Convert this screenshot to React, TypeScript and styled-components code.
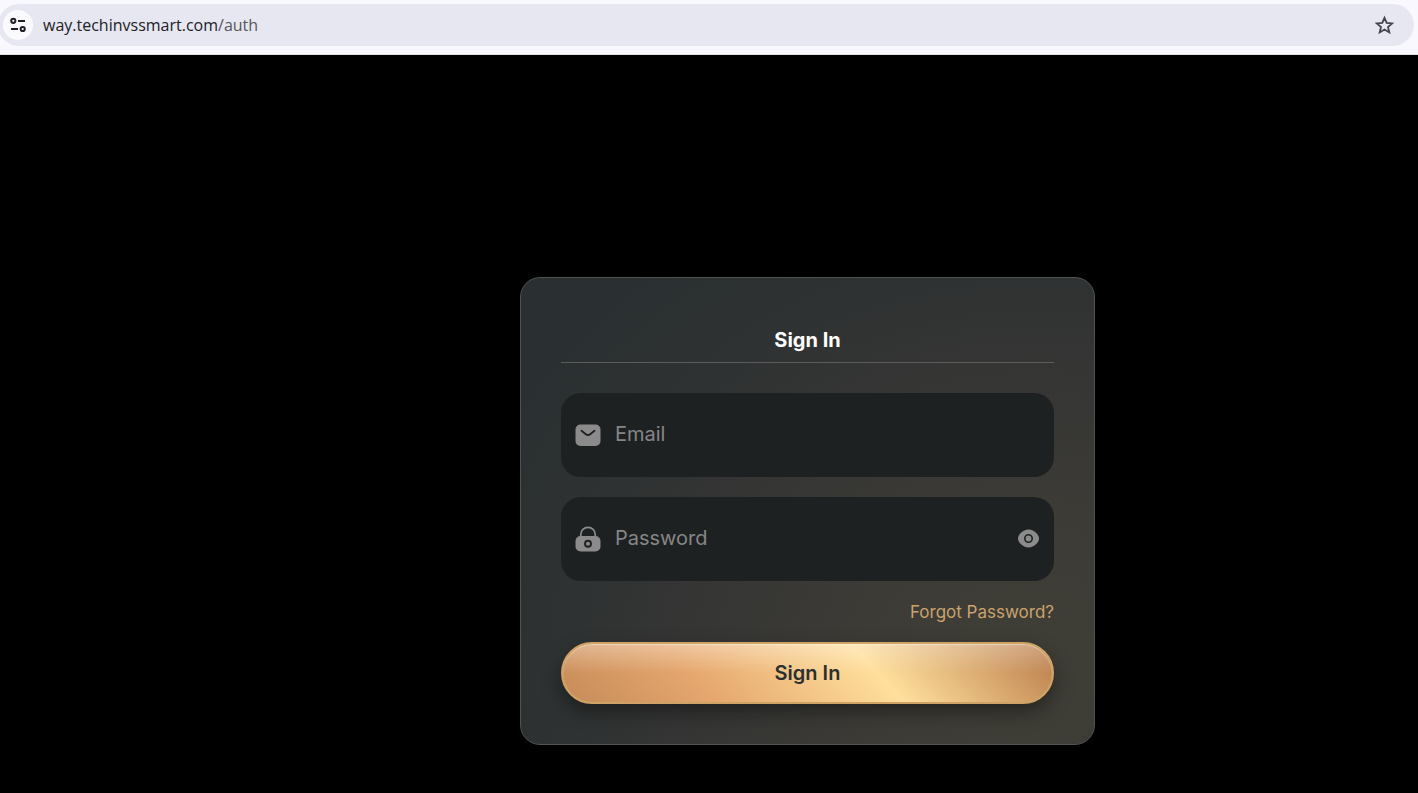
import React, { useState } from 'react';
import styled, { createGlobalStyle } from 'styled-components';

const GlobalStyle = createGlobalStyle`
  *, *::before, *::after { box-sizing: border-box; }
  html, body, #root { min-height: 100%; }
  body {
    margin: 0;
    background: #000;
    font-family: Inter, "Liberation Sans", sans-serif;
  }
`;

const BrowserBar = styled.header`
  padding: 4px 4px 8px 0;
  background: #f8f8fe;
  border-bottom: 1px solid #dfdfe6;
`;

const AddressPill = styled.div`
  display: flex;
  align-items: center;
  height: 42px;
  margin-left: -2px;
  padding: 0 20px 0 5px;
  border-radius: 21px;
  background: #e7e7f1;
`;

const IconButton = styled.button`
  display: flex;
  align-items: center;
  justify-content: center;
  flex: none;
  padding: 0;
  border: 0;
  background: none;
  color: inherit;
  cursor: pointer;
`;

const SiteInfoButton = styled(IconButton)`
  width: 30px;
  height: 30px;
  border-radius: 50%;
  background: #fbfbff;
  color: #202126;
`;

const StarButton = styled(IconButton)`
  color: #43444c;
`;

const Address = styled.div`
  flex: 1;
  margin-left: 10px;
  font: 16px/24px "Open Sans", "Noto Sans", sans-serif;
  color: #202126;
`;

const AddressPath = styled.span`
  color: #55565e;
`;

const Page = styled.main`
  display: flex;
  justify-content: center;
  padding: 222px 0 48px 197px;
`;

const Card = styled.form`
  width: 100%;
  max-width: 575px;
  padding: 40px;
  border: 1px solid #50524f;
  border-radius: 20px;
  background:
    radial-gradient(ellipse 105% 110% at 90% 83%, #3f3e36 0%, #3c3b36 30%, #353534 58%, #2e3232 80%, #2a2f31 100%);
`;

const Title = styled.h1`
  margin: 0 0 30px;
  padding: 10px 0;
  border-bottom: 1px solid #5c5d5b;
  font-size: 20px;
  line-height: 24px;
  font-weight: 700;
  text-align: center;
  color: #fff;
`;

const Field = styled.div`
  display: flex;
  align-items: center;
  gap: 14px;
  height: 84px;
  margin-bottom: 20px;
  padding: 0 14px;
  border-radius: 20px;
  background: #1e2122;
  color: #8b8b8b;
`;

const FieldLabel = styled.label`
  display: flex;
  flex: none;
`;

const Input = styled.input`
  flex: 1;
  min-width: 0;
  height: 100%;
  padding: 0 0 2px;
  border: 0;
  outline: 0;
  background: none;
  font: 20px/24px Inter, "Liberation Sans", sans-serif;
  color: #fff;
  &::placeholder { color: #858686; opacity: 1; }
`;

const ForgotRow = styled.div`
  display: flex;
  justify-content: flex-end;
  margin-bottom: 18px;
`;

const ForgotLink = styled.a`
  font-size: 17px;
  line-height: 23px;
  color: #cba36d;
  text-decoration: none;
`;

const SubmitButton = styled.button`
  display: block;
  width: 100%;
  height: 62px;
  padding: 0;
  border: 2px solid #cfa265;
  border-radius: 31px;
  background:
    linear-gradient(180deg, rgba(255, 255, 255, 0.3) 0%, rgba(255, 255, 255, 0) 50%) padding-box,
    linear-gradient(48deg, #c68b59 0%, #e6a86f 29%, #ffdf9c 63%, #c08552 96%) padding-box,
    #cfa265;
  box-shadow:
    inset 0 1px 1px rgba(255, 255, 255, 0.4),
    0 8px 20px rgba(0, 0, 0, 0.4);
  font: 600 20px/24px Inter, "Liberation Sans", sans-serif;
  color: #2a2f31;
  cursor: pointer;
`;

const TuneIcon = () => (
  <svg width="18" height="18" viewBox="0 0 18 18" fill="none" stroke="currentColor" strokeWidth="2" aria-hidden="true">
    <circle cx="4.300" cy="4.800" r="2.100" />
    <path d="M9 5h7M2 13h7" />
    <circle cx="13.700" cy="13" r="2.100" />
  </svg>
);

const StarIcon = () => (
  <svg width="20" height="20" viewBox="0 0 20 20" fill="none" stroke="currentColor" strokeWidth="1.800" aria-hidden="true">
    <path d="M10.500 2.800l2.200 5.100 5.500.5-4.200 3.600 1.300 5.400-4.800-2.900-4.800 2.900 1.300-5.400-4.200-3.600 5.500-.5z" />
  </svg>
);

const MailIcon = () => (
  <svg width="26" height="26" viewBox="0 0 26 26" aria-hidden="true">
    <rect x="0.500" y="2.500" width="25" height="21.500" rx="5" fill="currentColor" />
    <path d="M6.500 8.800l4.300 3.400c1.300 1 3.100 1 4.400 0l4.300-3.400" fill="none" stroke="#1e2122" strokeWidth="1.800" strokeLinecap="round" />
  </svg>
);

const LockIcon = () => (
  <svg width="26" height="26" viewBox="0 0 26 26" aria-hidden="true">
    <path d="M5.800 11V8.500a7.200 7.200 0 0 1 14.400 0V11" fill="none" stroke="currentColor" strokeWidth="1.700" />
    <rect x="0.500" y="10" width="25" height="15.500" rx="5" fill="currentColor" />
    <circle cx="13" cy="17.700" r="3" fill="none" stroke="#1e2122" strokeWidth="1.900" />
  </svg>
);

const EyeIcon = () => (
  <svg width="22" height="20" viewBox="0 0 22 20" aria-hidden="true">
    <path d="M10.500.5C4.500.5 0 6 0 9.500s4.500 9 10.500 9S21 13 21 9.500 16.500.5 10.500.5z" fill="currentColor" />
    <circle cx="10.500" cy="9.500" r="3.700" fill="none" stroke="#1e2122" strokeWidth="1.600" />
  </svg>
);

export default function App() {
  const [visible, setVisible] = useState(false);
  return (
    <>
      <GlobalStyle />
      <BrowserBar>
        <AddressPill>
          <SiteInfoButton type="button" aria-label="View site information"><TuneIcon /></SiteInfoButton>
          <Address>way.techinvssmart.com<AddressPath>/auth</AddressPath></Address>
          <StarButton type="button" aria-label="Bookmark this tab"><StarIcon /></StarButton>
        </AddressPill>
      </BrowserBar>
      <Page>
        <Card onSubmit={(e) => e.preventDefault()}>
          <Title>Sign In</Title>
          <Field>
            <FieldLabel htmlFor="email" aria-label="Email"><MailIcon /></FieldLabel>
            <Input id="email" type="email" placeholder="Email" />
          </Field>
          <Field>
            <FieldLabel htmlFor="password" aria-label="Password"><LockIcon /></FieldLabel>
            <Input id="password" type={visible ? 'text' : 'password'} placeholder="Password" />
            <IconButton type="button" aria-label="Show password" onClick={() => setVisible(!visible)}>
              <EyeIcon />
            </IconButton>
          </Field>
          <ForgotRow><ForgotLink href="#forgot">Forgot Password?</ForgotLink></ForgotRow>
          <SubmitButton type="submit">Sign In</SubmitButton>
        </Card>
      </Page>
    </>
  );
}
